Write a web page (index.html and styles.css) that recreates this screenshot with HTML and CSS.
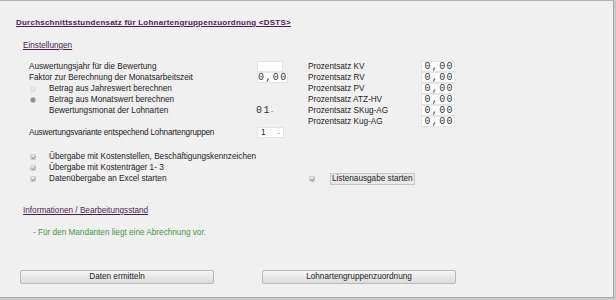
FILE: index.html
```html
<!DOCTYPE html>
<html lang="de">
<head>
  <meta charset="UTF-8" />
  <title>DSTS</title>
  <link rel="stylesheet" href="styles.css">
</head>
<body>
  <div class="page">
    <h2 class="title">Durchschnittsstundensatz für Lohnartengruppenzuordnung &lt;DSTS&gt;</h2>

    <h3 class="section">Einstellungen</h3>

    <div class="settings">
      <div class="col-left">
        <div class="row">
          <span class="label">Auswertungsjahr für die Bewertung</span>
          <input class="field" type="text" value="">
        </div>
        <div class="row">
          <span class="label">Faktor zur Berechnung der Monatsarbeitszeit</span>
          <input class="field num wide" type="text" value="0,00">
        </div>
        <div class="row">
          <span class="radio"></span>
          <span class="label indent">Betrag aus Jahreswert berechnen</span>
        </div>
        <div class="row">
          <span class="radio checked"></span>
          <span class="label indent">Betrag aus Monatswert berechnen</span>
        </div>
        <div class="row">
          <span class="radio none"></span>
          <span class="label indent">Bewertungsmonat der Lohnarten</span>
          <span class="month">01<span class="arrow">-</span></span>
        </div>
        <div class="row variant">
          <span class="label">Auswertungsvariante entspechend Lohnartengruppen</span>
          <span class="select">1<span class="arrow">-</span></span>
        </div>
      </div>

      <div class="col-right">
        <div class="row"><span class="label">Prozentsatz KV</span><input class="field num pct" type="text" value="0,00"></div>
        <div class="row"><span class="label">Prozentsatz RV</span><input class="field num pct" type="text" value="0,00"></div>
        <div class="row"><span class="label">Prozentsatz PV</span><input class="field num pct" type="text" value="0,00"></div>
        <div class="row"><span class="label">Prozentsatz ATZ-HV</span><input class="field num pct" type="text" value="0,00"></div>
        <div class="row"><span class="label">Prozentsatz SKug-AG</span><input class="field num pct" type="text" value="0,00"></div>
        <div class="row"><span class="label">Prozentsatz Kug-AG</span><input class="field num pct" type="text" value="0,00"></div>
      </div>
    </div>

    <div class="checks">
      <div class="col-left">
        <div class="row"><span class="check"></span><span class="label indent">Übergabe mit Kostenstellen, Beschäftigungskennzeichen</span></div>
        <div class="row"><span class="check"></span><span class="label indent">Übergabe mit Kostenträger 1- 3</span></div>
        <div class="row"><span class="check"></span><span class="label indent">Datenübergabe an Excel starten</span></div>
      </div>
      <div class="col-right">
        <div class="row"></div>
        <div class="row"></div>
        <div class="row"><span class="check"></span><span class="boxed">Listenausgabe starten</span></div>
      </div>
    </div>

    <h3 class="section info">Informationen / Bearbeitungsstand</h3>
    <p class="status">- Für den Mandanten liegt eine Abrechnung vor.</p>

    <div class="buttons">
      <button class="btn first" type="button">Daten ermitteln</button>
      <button class="btn second" type="button">Lohnartengruppenzuordnung</button>
    </div>
  </div>
</body>
</html>
```

FILE: styles.css
```css
html, body {
  margin: 0;
  padding: 0;
  background-color: #c8c8c8;
}

body {
  font-family: "Liberation Sans", Arial, sans-serif;
  font-size: 8.2px;
  color: #222;
}

.page {
  box-sizing: border-box;
  width: 614px;
  height: 298px;
  background-color: #f0f0f0;
  border-top: 1px solid #b4b4b4;
  border-bottom: 1px solid #a8a8a8;
  border-right: 1px solid #a8a8a8;
  padding: 16px 0 0 16px;
}

.title {
  margin: 0;
  font-size: 8px;
  letter-spacing: 0.23px;
  font-weight: bold;
  color: #4a1f4a;
  text-decoration: underline;
  line-height: 12px;
}

.section {
  margin: 11px 0 0 7px;
  font-size: 8.2px;
  font-weight: normal;
  color: #4a1f4a;
  text-decoration: underline;
  line-height: 12px;
}

.settings, .checks {
  display: flex;
  margin-left: 13px;
}

.settings {
  margin-top: 9px;
}

.checks {
  margin-top: 13px;
}

.col-left {
  width: 279px;
}

.row {
  display: flex;
  align-items: center;
  height: 11px;
  line-height: 11px;
  white-space: nowrap;
}

.col-left .label {
  width: 228px;
}

.col-left .label.indent {
  width: 209px;
}

.col-right .label {
  width: 113px;
}

.variant {
  margin-top: 11px;
}

.variant .label {
  letter-spacing: -0.2px;
}

.field {
  box-sizing: border-box;
  height: 11px;
  width: 26px;
  margin: 0;
  padding: 0;
  border: 1px solid #e4e4e4;
  background: #fff;
  font-family: "Liberation Mono", "Courier New", monospace;
  font-size: 10px;
  letter-spacing: 1.4px;
  line-height: 9px;
  color: #333;
}

.num {
  text-align: right;
}

.wide {
  width: 31px;
}

.pct {
  width: 34px;
}

.radio, .check {
  box-sizing: border-box;
  width: 6px;
  height: 6px;
  margin: 0 13px 0 1px;
  flex: none;
}

.radio {
  border-radius: 50%;
  background: #e6e6e6;
  border: 1px solid #d8d8d8;
}

.radio.checked {
  background: #8a8a8a;
  border-color: #b8b8b8;
}

.radio.none {
  visibility: hidden;
}

.check {
  background: #e2e2e2;
  border: 1px solid #d2d2d2;
  position: relative;
}

.check::after {
  content: "";
  position: absolute;
  left: 1px;
  top: 0px;
  width: 2px;
  height: 3px;
  border-right: 1px solid #999;
  border-bottom: 1px solid #999;
  transform: rotate(40deg);
}

.month {
  margin-left: -2px;
  font-family: "Liberation Mono", "Courier New", monospace;
  font-size: 10px;
  letter-spacing: 1.4px;
  color: #333;
}

.arrow {
  font-family: "Liberation Sans", Arial, sans-serif;
  font-size: 8px;
  letter-spacing: 0;
  color: #777;
}

.select {
  box-sizing: border-box;
  display: flex;
  justify-content: space-between;
  width: 27px;
  height: 11px;
  padding: 0 3px 0 3px;
  background: #fff;
  border: 1px solid #e4e4e4;
  line-height: 9px;
}

.boxed {
  border: 1px solid #c4c4c4;
  background: #e8e8e8;
  padding: 0 1px;
  margin-left: 2px;
  line-height: 10px;
}

.info {
  margin-top: 21px;
}

.status {
  margin: 10px 0 0 17px;
  color: #3c9a3c;
  line-height: 12px;
}

.buttons {
  display: flex;
  margin-top: 31px;
  margin-left: 4px;
}

.btn {
  box-sizing: border-box;
  width: 194px;
  height: 14px;
  padding: 0;
  border: 1px solid #b8b8b8;
  border-radius: 2px;
  background: linear-gradient(#f6f6f6, #dcdcdc);
  font-family: "Liberation Sans", Arial, sans-serif;
  font-size: 8.2px;
  color: #222;
  line-height: 12px;
}

.btn.second {
  margin-left: 48px;
}
```
